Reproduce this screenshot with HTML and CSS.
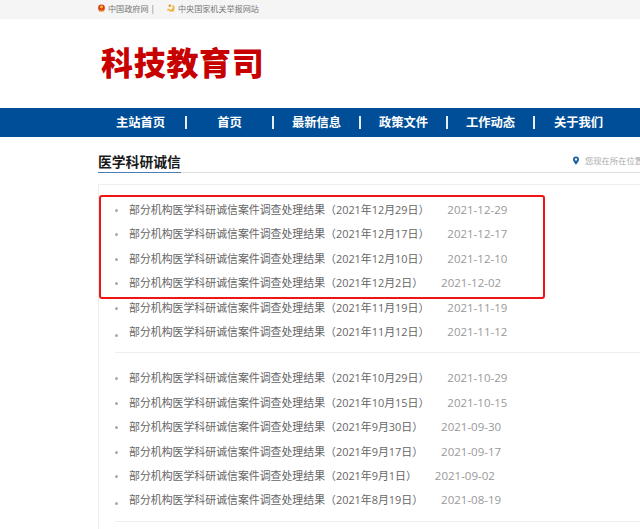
FILE: index.html
```html
<!DOCTYPE html>
<html lang="zh-CN">
<head>
    <meta charset="UTF-8">
    <meta name="viewport" content="width=device-width, initial-scale=1.0">
    <title>医学科研诚信 - 科技教育司</title>
    <link rel="stylesheet" href="styles.css">
</head>
<body>
    <div class="topbar">
        <svg class="top-icon" viewBox="0 0 8 9"><circle cx="4" cy="4.4" r="3.8" fill="#d9361a"/><circle cx="4" cy="3.4" r="1.7" fill="#f5c02c"/><rect x="1" y="6.4" width="6" height="2" fill="#ea7a18"/></svg>
        <a href="#" class="top-link">中国政府网</a>
        <span class="top-sep">|</span>
        <svg class="top-icon party" viewBox="0 0 9 9"><path d="M5.6 .6A4 4 0 0 1 7.4 7.2L8.6 8.6 6.8 8.2A4.4 4.4 0 0 1 1.4 6.8L.5 7.8.4 5.4 2 5.4C3 6.8 5 6.8 6 5.4 6.8 4 6.6 2 5.6 .6Z" fill="#eeb02e"/><path d="M1.4 1.8 3.2 .4 5.2 2.2 4.2 3.4 3.4 2.6 2.6 3.6Z" fill="#e39a24"/></svg>
        <a href="#" class="top-link">中央国家机关举报网站</a>
    </div>

    <div class="header">
        <h1>科技教育司</h1>
    </div>

    <div class="navbar">
        <a href="#" class="first">主站首页</a>
        <a href="#">首页</a>
        <a href="#">最新信息</a>
        <a href="#">政策文件</a>
        <a href="#">工作动态</a>
        <a href="#" class="last">关于我们</a>
    </div>

    <div class="main">
        <div class="section-head">
            <h2>医学科研诚信</h2>
            <div class="location">
                <svg class="pin" viewBox="0 0 8 11"><path fill-rule="evenodd" d="M4 0A4 4 0 0 0 0 4C0 6.6 4 11 4 11S8 6.6 8 4A4 4 0 0 0 4 0ZM4 2.4A1.6 1.6 0 1 1 4 5.6 1.6 1.6 0 0 1 4 2.4Z" fill="#1c5f9e"/></svg>
                <span>您现在所在位置</span>
            </div>
        </div>

        <div class="list-box">
            <ul class="news-list">
                <li><a href="#">部分机构医学科研诚信案件调查处理结果（2021年12月29日）</a><span class="date">2021-12-29</span></li>
                <li><a href="#">部分机构医学科研诚信案件调查处理结果（2021年12月17日）</a><span class="date">2021-12-17</span></li>
                <li><a href="#">部分机构医学科研诚信案件调查处理结果（2021年12月10日）</a><span class="date">2021-12-10</span></li>
                <li><a href="#">部分机构医学科研诚信案件调查处理结果（2021年12月2日）</a><span class="date">2021-12-02</span></li>
                <li><a href="#">部分机构医学科研诚信案件调查处理结果（2021年11月19日）</a><span class="date">2021-11-19</span></li>
                <li class="end"><a href="#">部分机构医学科研诚信案件调查处理结果（2021年11月12日）</a><span class="date">2021-11-12</span></li>
            </ul>
            <ul class="news-list">
                <li><a href="#">部分机构医学科研诚信案件调查处理结果（2021年10月29日）</a><span class="date">2021-10-29</span></li>
                <li><a href="#">部分机构医学科研诚信案件调查处理结果（2021年10月15日）</a><span class="date">2021-10-15</span></li>
                <li><a href="#">部分机构医学科研诚信案件调查处理结果（2021年9月30日）</a><span class="date">2021-09-30</span></li>
                <li><a href="#">部分机构医学科研诚信案件调查处理结果（2021年9月17日）</a><span class="date">2021-09-17</span></li>
                <li><a href="#">部分机构医学科研诚信案件调查处理结果（2021年9月1日）</a><span class="date">2021-09-02</span></li>
                <li class="end"><a href="#">部分机构医学科研诚信案件调查处理结果（2021年8月19日）</a><span class="date">2021-08-19</span></li>
            </ul>
            <div class="red-box"></div>
        </div>
    </div>
</body>
</html>
```

FILE: styles.css
```css
html, body {
    height: 100%;
    overflow: hidden;
}

body {
    font-family: "Open Sans", "Noto Sans CJK SC", sans-serif;
    background-color: #ffffff;
    color: #666;
    margin: 0;
    padding: 0;
}

a {
    text-decoration: none;
    color: inherit;
}

.topbar {
    background-color: #f5f5f5;
    height: 16px;
    padding-left: 98px;
    padding-bottom: 3px;
    display: flex;
    align-items: center;
    font-size: 8.1px;
    color: #777;
}

.top-icon {
    width: 7px;
    height: 8px;
    margin-right: 3px;
}

.top-icon.party {
    width: 8px;
    height: 8px;
}

.top-sep {
    margin-left: 2px;
    margin-right: 12px;
}

.header {
    height: 89px;
    padding-left: 101px;
    display: flex;
    align-items: center;
}

.header h1 {
    margin: 0;
    font-family: "Noto Sans CJK SC", sans-serif;
    font-size: 32px;
    font-weight: 900;
    letter-spacing: 0.7px;
    color: #c70000;
    line-height: 40px;
    padding-bottom: 5px;
}

.navbar {
    background-color: #004e98;
    height: 29px;
    padding-left: 100px;
    display: flex;
    align-items: center;
}

.navbar a {
    flex: 0 0 87px;
    height: 13px;
    line-height: 13px;
    text-align: center;
    font-size: 12.3px;
    font-weight: bold;
    color: #ffffff;
    border-right: 2px solid #e6edf5;
    box-sizing: border-box;
}

.navbar a.first {
    padding-right: 4px;
}

.navbar a.last {
    border-right: none;
}

.section-head {
    margin-left: 98px;
    height: 36px;
    border-bottom: 1px solid #ddd;
    display: flex;
    justify-content: space-between;
    align-items: flex-end;
    box-sizing: border-box;
}

.section-head h2 {
    margin: 0 0 -1px;
    font-size: 13.8px;
    font-weight: bold;
    color: #1a1a1a;
    line-height: 20px;
    border-bottom: 1px solid #4a7fb5;
}

.location {
    flex: 0 0 67px;
    display: flex;
    align-items: center;
    white-space: nowrap;
    overflow: hidden;
    font-size: 8.3px;
    color: #aaa;
    margin-bottom: 6px;
}

.pin {
    width: 6px;
    height: 9px;
    flex: none;
    margin-right: 6px;
}

.list-box {
    position: relative;
    margin: 11px 0 0 98px;
    border-top: 1px solid #eee;
    border-left: 1px solid #eee;
    padding: 13px 0 0 16px;
    height: 331px;
}

.news-list {
    list-style: none;
    margin: 0 0 13px;
    padding: 0 0 8px;
    border-bottom: 1px solid #eee;
}

.news-list li {
    height: 24.4px;
    line-height: 24.4px;
    font-size: 10.9px;
    padding-left: 14px;
    white-space: nowrap;
    position: relative;
}

.news-list li::before {
    content: "";
    position: absolute;
    left: 0;
    top: 11px;
    width: 3px;
    height: 3px;
    border-radius: 50%;
    background-color: #aaa;
}

.news-list li.end::before {
    top: 14px;
}

.date {
    margin-left: 18px;
    font-size: 11.5px;
    color: #999;
}

.red-box {
    position: absolute;
    left: 0;
    top: 10px;
    width: 446px;
    height: 104px;
    border: 2px solid #f01414;
    border-radius: 3px;
    box-sizing: border-box;
}
```
